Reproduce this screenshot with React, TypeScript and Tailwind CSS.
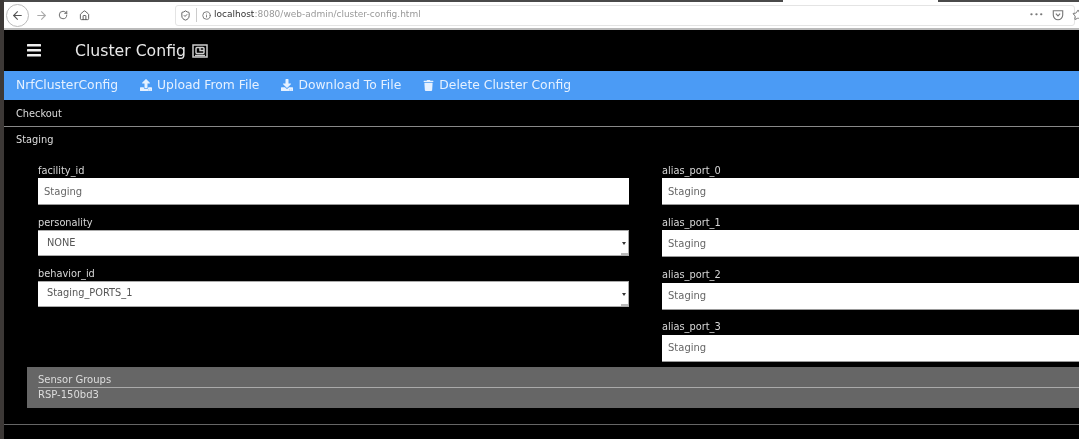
import { FaDownload, FaTrash, FaUpload } from 'react-icons/fa';
import { ArrowLeft, ArrowRight, Home, Info, RotateCw, ShieldCheck, Star } from 'lucide-react';

const TextField = ({ label, value }: { label: string; value: string }) => (
  <div className="mb-[8.3px]">
    <label className="block h-[17px] pt-[2.500px] text-[9.8px] leading-[14px] text-[#d8d8d8]">{label}</label>
    <input
      readOnly
      value={value}
      className="block h-[27px] w-full border-b border-[#999] bg-white pl-[6px] text-[10px] text-[#666] outline-none"
    />
  </div>
);

const SelectField = ({ label, value, mb }: { label: string; value: string; mb: string }) => (
  <div className={mb}>
    <label className="block h-[17px] pt-[3px] text-[9.8px] leading-[14px] text-[#d8d8d8]">{label}</label>
    <div className="relative flex h-[26px] items-center border-y border-r border-[#aaa] bg-white pl-[9px] text-[9.8px] text-[#555]">
      {value}
      <span className="absolute right-[2px] top-[11px] h-0 w-0 border-x-[2px] border-t-[3px] border-x-transparent border-t-[#333]" />
      <span className="absolute bottom-0 right-0 h-[2px] w-[7px] bg-[#bbb]" />
    </div>
  </div>
);

const ToolAction = ({ icon, label }: { icon: React.ReactNode; label: string }) => (
  <span className="flex items-center gap-[5px]">
    {icon}
    {label}
  </span>
);

export default function App() {
  return (
    <div className="h-[439px] w-[1079px] overflow-hidden border-l-[4px] border-[#3c3836] bg-black font-['DejaVu_Sans',sans-serif] blur-[0.4px]">
      {/* browser chrome */}
      <div className="flex h-[2px] bg-[#4a4a4a]">
        <div className="ml-[779px] h-full w-[155px] bg-white" />
      </div>
      <div className="flex h-[28px] items-center border-b-2 border-[#bbb] bg-white text-[#555]">
        <span className="ml-[2px] flex h-[23px] w-[23px] items-center justify-center rounded-full border border-[#bbb]">
          <ArrowLeft size={13} />
        </span>
        <ArrowRight size={13} className="ml-[6px] text-[#aaa]" />
        <RotateCw size={10} className="ml-[10px]" />
        <Home size={11} className="ml-[11px]" />
        <div className="ml-[85px] flex h-[21px] w-[900px] items-center rounded-[3px] border border-[#e4e4e4] pl-[4px]">
          <ShieldCheck size={11} />
          <span className="mx-[5px] h-[14px] border-l border-[#ccc]" />
          <Info size={9} />
          <span className="ml-[3px] text-[9px] text-[#999]">
            <span className="text-[#333]">localhost</span>:8080/web-admin/cluster-config.html
          </span>
          <span className="ml-auto flex items-center text-[#777]">
            <span className="mr-[8px] text-[7.500px] tracking-[0.5px]">•••</span>
            <svg width="12" height="12" viewBox="0 0 14 14" fill="none" stroke="#777" strokeWidth="1.3" aria-hidden="true">
              <path d="M1.500 2h11v5a5.500 5.500 0 0 1-11 0z" />
              <path d="M4.500 5.500 7 8l2.500-2.500" />
            </svg>
            <Star size={12} className="ml-[8px] mr-[-10px]" />
          </span>
        </div>
      </div>

      {/* title bar */}
      <div className="flex h-[41px] items-center text-white">
        <svg width="14" height="13" viewBox="0 0 14 13" className="ml-[23px]" fill="#f0f0f0" aria-hidden="true">
          <rect y="0" width="14" height="2.500" rx="0.5" />
          <rect y="5" width="14" height="2.500" rx="0.5" />
          <rect y="10" width="14" height="2.500" rx="0.5" />
        </svg>
        <span className="ml-[34px] text-[15.7px] text-[#e8e8e8]">Cluster Config</span>
        <svg width="16" height="14" viewBox="0 0 16 14" className="ml-[6px]" fill="none" stroke="#ccc" strokeWidth="1.5" aria-hidden="true">
          <rect x="1" y="1" width="14" height="12" />
          <rect x="4" y="3.500" width="8" height="6" rx="1" />
          <path d="M8 3.500v3h4M3 11.500h10" />
        </svg>
      </div>

      {/* action bar */}
      <div className="flex h-[29px] items-center gap-[22px] bg-[#4b9bf5] pl-[12px] text-[12.350px] text-[#e6f1ff]">
        <span>NrfClusterConfig</span>
        <ToolAction icon={<FaUpload size={12} />} label="Upload From File" />
        <ToolAction icon={<FaDownload size={12} />} label="Download To File" />
        <ToolAction icon={<FaTrash size={11} />} label="Delete Cluster Config" />
      </div>

      <div className="flex h-[27px] items-center border-b border-[#888] pl-[12px] pt-[2px] text-[9.8px] text-[#ddd]">Checkout</div>

      {/* staging section */}
      <div className="h-[298px] border-b border-[#666]">
        <div className="flex h-[26px] items-center pl-[12px] text-[9.8px] text-[#ddd]">Staging</div>
        <div className="flex pl-[34px] pt-[8px]">
          <div className="w-[591px] shrink-0">
            <TextField label="facility_id" value="Staging" />
            <SelectField label="personality" value="NONE" mb="mb-[7.500px]" />
            <SelectField label="behavior_id" value="Staging_PORTS_1" mb="" />
          </div>
          <div className="ml-[33px] w-[440px] shrink-0">
            <TextField label="alias_port_0" value="Staging" />
            <TextField label="alias_port_1" value="Staging" />
            <TextField label="alias_port_2" value="Staging" />
            <TextField label="alias_port_3" value="Staging" />
          </div>
        </div>
        <div className="ml-[23px] mt-[-2.800px] h-[41px] bg-[#666] pl-[11px] text-[10px] text-[#ddd]">
          <div className="flex h-[21px] items-end border-b border-[#aaa]">Sensor Groups</div>
          <div className="flex h-[13px] items-center">RSP-150bd3</div>
        </div>
      </div>
    </div>
  );
}
